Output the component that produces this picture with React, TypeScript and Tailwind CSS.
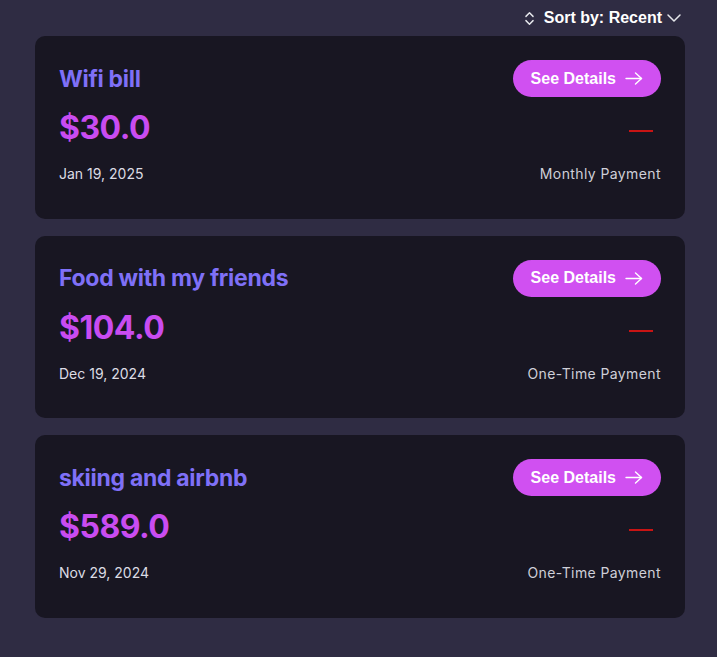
import React from "react";
import { ChevronsUpDown, ChevronDown } from "lucide-react";

type Expense = {
  title: string;
  amount: string;
  date: string;
  kind: string;
};

const EXPENSES: Expense[] = [
  { title: "Wifi bill", amount: "$30.0", date: "Jan 19, 2025", kind: "Monthly Payment" },
  { title: "Food with my friends", amount: "$104.0", date: "Dec 19, 2024", kind: "One-Time Payment" },
  { title: "skiing and airbnb", amount: "$589.0", date: "Nov 29, 2024", kind: "One-Time Payment" },
];

const ArrowIcon = () => (
  <svg width="18" height="13" viewBox="0 0 18 13" fill="none" stroke="currentColor" strokeWidth="1.4" strokeLinecap="round" strokeLinejoin="round" aria-hidden="true">
    <path d="M1 6.5h15.5" />
    <path d="M10.5 1l6 5.5-6 5.5" />
  </svg>
);

const ExpenseCard = ({ item }: { item: Expense }) => {
  return (
    <div className="rounded-[10px] bg-[#181622] pl-6 pr-6 pt-6 pb-[34.5px]">
      <div className="flex items-center justify-between">
        <h2 className="text-[23px] font-bold leading-8 tracking-[-0.3px] text-[#7f70f7]">{item.title}</h2>
        <button className="flex h-[37px] items-center gap-[9px] rounded-full bg-[#d050f1] pl-[18px] pr-[18px] font-['Liberation_Sans',Arial,sans-serif] text-[16px] font-bold text-white">
          See Details
          <ArrowIcon />
        </button>
      </div>
      <div className="mt-[11px] flex h-10 items-center justify-between">
        <span className="text-[32px] font-bold leading-10 tracking-[-0.5px] text-[#c94cf1]">{item.amount}</span>
        <span className="mr-2 mt-[6px] h-[2px] w-6 bg-[#c81414]" />
      </div>
      <div className="mt-4 flex items-center justify-between text-[14px] leading-5 text-[#dcdce4]">
        <span>{item.date}</span>
        <span className="tracking-[0.4px] text-[#cfcfd8]">{item.kind}</span>
      </div>
    </div>
  );
};

export default function App() {
  return (
    <div className="min-h-screen bg-[#2f2c43] font-['Inter','Noto_Sans',sans-serif]">
      <div className="flex h-9 items-center justify-end pr-[31px] font-['Liberation_Sans',Arial,sans-serif] text-[16px] font-bold text-white">
        <ChevronsUpDown size={17} strokeWidth={2} className="mr-[6px] text-gray-200" />
        <span>Sort by: Recent</span>
        <ChevronDown size={24} strokeWidth={1.5} className="text-gray-200" />
      </div>
      <div className="flex flex-col gap-[17px] pl-[35px] pr-[32px]">
        {EXPENSES.map((item) => (
          <ExpenseCard key={item.title} item={item} />
        ))}
      </div>
    </div>
  );
}
